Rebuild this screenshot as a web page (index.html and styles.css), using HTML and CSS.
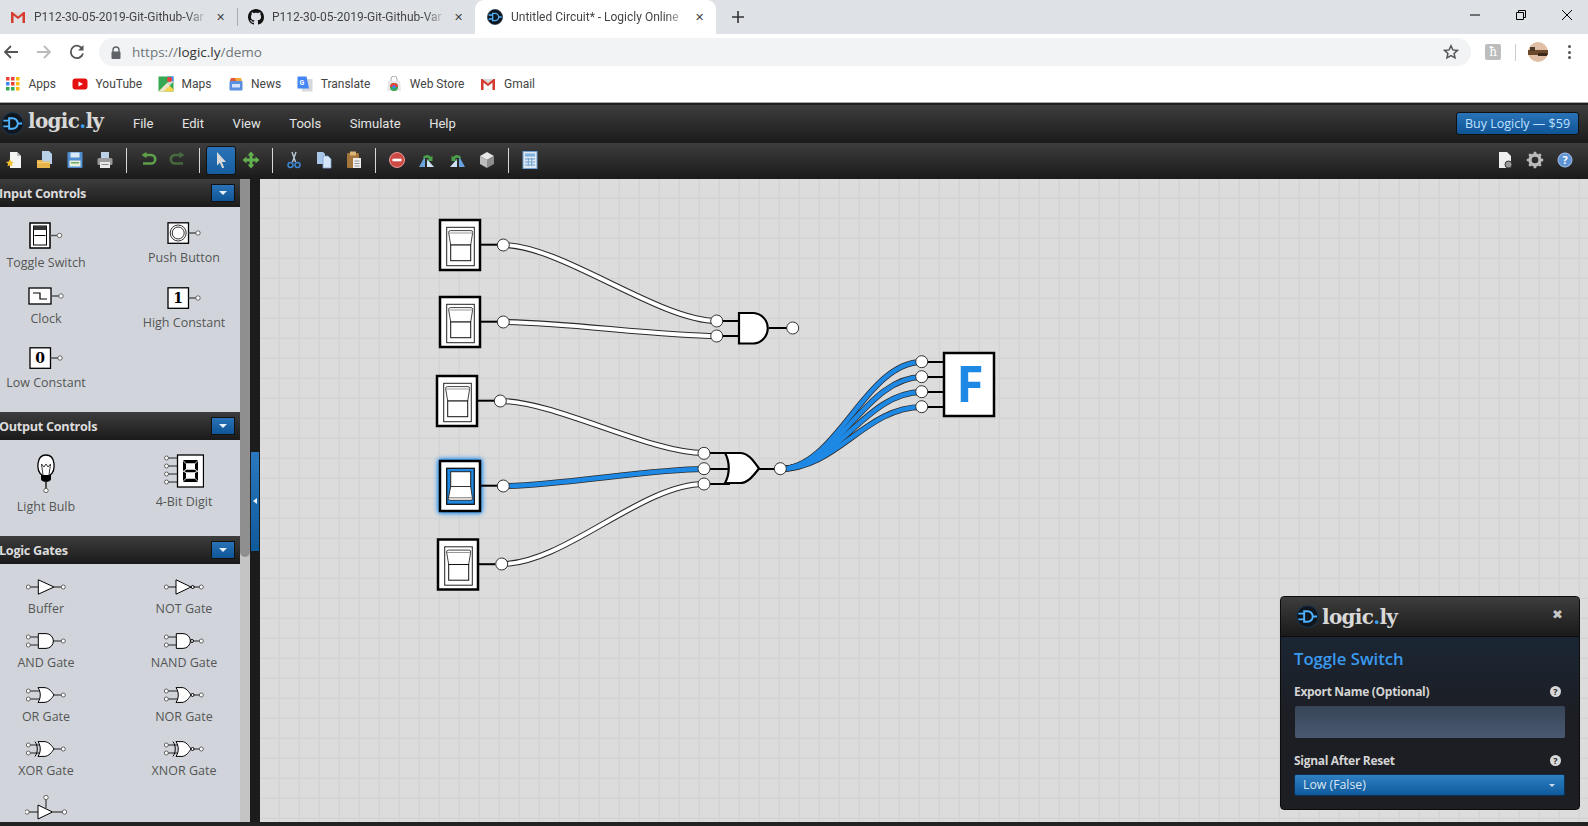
FILE: index.html
```html
<!DOCTYPE html>
<html lang="en">
<head>
    <meta charset="UTF-8">
    <title>Untitled Circuit* - Logicly Online</title>
    <link rel="stylesheet" href="styles.css">
</head>
<body>
    <svg class="defs" width="0" height="0">
        <defs>
            <symbol id="logo-mark" viewBox="0 0 24 24">
                <circle cx="12" cy="12" r="11.4" fill="#10161d" stroke="#1d3a57" stroke-width="1"/>
                <path d="M2.5 9h6M2.5 15h6M8.5 6.5h3.5a5.5 5.5 0 0 1 0 11H8.500zM17.500 12h4.500" fill="none" stroke="#4fb2ff" stroke-width="2"/>
            </symbol>
            <symbol id="gmail" viewBox="0 0 16 16">
                <path d="M1 3h14v11h-2.500V7L8 10.500 3.500 7v7H1z" fill="#d9d9d9"/>
                <path d="M1 14V3h1.500L8 7.500 13.500 3H15v11h-2.500V6.500L8 10 3.500 6.500V14z" fill="#d63b2f"/>
            </symbol>
            <symbol id="g-buffer" viewBox="0 0 40 16">
                <path d="M4 8h8M28 8h7" stroke="#555" stroke-width="1.500"/>
                <path d="M12.300 .8V15.200L28 8z" fill="#fff" stroke="#000" stroke-width="1"/>
                <circle cx="2.300" cy="8" r="2" class="pin"/><circle cx="37.300" cy="8" r="2" class="pin"/>
            </symbol>
            <symbol id="g-not" viewBox="0 0 40 16">
                <path d="M4 8h8M30 8h6" stroke="#555" stroke-width="1.500"/>
                <path d="M12 .8V15.200L27 8z" fill="#fff" stroke="#000" stroke-width="1"/>
                <circle cx="28.700" cy="8" r="1.500" fill="#fff" stroke="#000" stroke-width="1"/>
                <circle cx="2.300" cy="8" r="2" class="pin"/><circle cx="37.300" cy="8" r="2" class="pin"/>
            </symbol>
            <symbol id="g-and" viewBox="0 0 40 16">
                <path d="M4 4h8M4 12h8M27 8h8" stroke="#222" stroke-width="1"/>
                <path d="M12.300 .6H20a7.400 7.400 0 0 1 0 14.800H12.300z" fill="#fff" stroke="#000" stroke-width="1"/>
                <circle cx="2.300" cy="4" r="2" class="pin"/><circle cx="2.300" cy="12" r="2" class="pin"/><circle cx="37.300" cy="8" r="2" class="pin"/>
            </symbol>
            <symbol id="g-nand" viewBox="0 0 40 16">
                <path d="M4 4h8M4 12h8M30 8h6" stroke="#222" stroke-width="1"/>
                <path d="M12.300 .6H19a7.400 7.400 0 0 1 0 14.800H12.300z" fill="#fff" stroke="#000" stroke-width="1"/>
                <circle cx="28" cy="8" r="1.500" fill="#fff" stroke="#000" stroke-width="1"/>
                <circle cx="2.300" cy="4" r="2" class="pin"/><circle cx="2.300" cy="12" r="2" class="pin"/><circle cx="37.300" cy="8" r="2" class="pin"/>
            </symbol>
            <symbol id="g-or" viewBox="0 0 40 16">
                <path d="M4 4h10M4 12h10M27 8h8" stroke="#222" stroke-width="1"/>
                <path d="M12 .6H18C23 .6 26 5 28 8 26 11 23 15.400 18 15.400H12C15 11 15 5 12 .6z" fill="#fff" stroke="#000" stroke-width="1"/>
                <circle cx="2.300" cy="4" r="2" class="pin"/><circle cx="2.300" cy="12" r="2" class="pin"/><circle cx="37.300" cy="8" r="2" class="pin"/>
            </symbol>
            <symbol id="g-nor" viewBox="0 0 40 16">
                <path d="M4 4h10M4 12h10M30 8h6" stroke="#222" stroke-width="1"/>
                <path d="M12 .6H18C22 .6 25 5 27 8 25 11 22 15.400 18 15.400H12C15 11 15 5 12 .6z" fill="#fff" stroke="#000" stroke-width="1"/>
                <circle cx="28.500" cy="8" r="1.500" fill="#fff" stroke="#000" stroke-width="1"/>
                <circle cx="2.300" cy="4" r="2" class="pin"/><circle cx="2.300" cy="12" r="2" class="pin"/><circle cx="37.300" cy="8" r="2" class="pin"/>
            </symbol>
            <symbol id="g-xor" viewBox="0 0 40 16">
                <path d="M4 4h10M4 12h10M27 8h8" stroke="#222" stroke-width="1"/>
                <path d="M9 .6C12 5 12 11 9 15.400" fill="none" stroke="#000" stroke-width="1"/>
                <path d="M12 .6H18C23 .6 26 5 28 8 26 11 23 15.400 18 15.400H12C15 11 15 5 12 .6z" fill="#fff" stroke="#000" stroke-width="1"/>
                <circle cx="2.300" cy="4" r="2" class="pin"/><circle cx="2.300" cy="12" r="2" class="pin"/><circle cx="37.300" cy="8" r="2" class="pin"/>
            </symbol>
            <symbol id="g-xnor" viewBox="0 0 40 16">
                <path d="M4 4h10M4 12h10M30 8h6" stroke="#222" stroke-width="1"/>
                <path d="M9 .6C12 5 12 11 9 15.400" fill="none" stroke="#000" stroke-width="1"/>
                <path d="M12 .6H18C22 .6 25 5 27 8 25 11 22 15.400 18 15.400H12C15 11 15 5 12 .6z" fill="#fff" stroke="#000" stroke-width="1"/>
                <circle cx="28.500" cy="8" r="1.500" fill="#fff" stroke="#000" stroke-width="1"/>
                <circle cx="2.300" cy="4" r="2" class="pin"/><circle cx="2.300" cy="12" r="2" class="pin"/><circle cx="37.300" cy="8" r="2" class="pin"/>
            </symbol>

            <g id="switch-off">
                <rect x="0" y="0" width="40" height="50" fill="#fff" stroke="#000" stroke-width="2.500"/>
                <rect x="6.700" y="7.300" width="27.600" height="38.400" fill="#fff" stroke="#222" stroke-width="1"/>
                <path d="M8.600 12.500Q8.600 10.600 10.500 10.600H31Q32.700 10.600 32.700 12.500L30.700 25H10.700z" fill="#fff" stroke="#444" stroke-width="1"/>
                <path d="M9 13H32.300" stroke="#999" stroke-width="1"/>
                <rect x="10.700" y="25" width="20" height="15.700" fill="#fff" stroke="#111" stroke-width="1"/>
                <path d="M41 24.700H57" stroke="#000" stroke-width="2"/>
            </g>
            <g id="switch-on">
                <rect x="0" y="0" width="40" height="50" fill="#fff" stroke="#000" stroke-width="2.500" class="glow"/>
                <rect x="6.700" y="7.300" width="27.600" height="36" fill="#1e88e5" stroke="#111" stroke-width="1.300"/>
                <rect x="10.700" y="10.700" width="20" height="14.800" fill="#fff" stroke="#222" stroke-width="1"/>
                <path d="M10.700 25.500H30.700L32.500 37.500Q32.500 39.300 31 39.300H10Q8.300 39.300 8.300 37.500z" fill="#fff" stroke="#333" stroke-width="1"/>
                <path d="M9 36.800H32" stroke="#777" stroke-width="1"/>
                <path d="M41 24.700H57" stroke="#000" stroke-width="2"/>
            </g>

            <g id="paths-off">
                <path d="M503 245C561 245 659 321 717 321"/>
                <path d="M503 322C561 322 659 336 717 336"/>
                <path d="M500 401C555 401 649 453 704 453"/>
                <path d="M502 564C564 564 642 484 704 484"/>
            </g>
            <g id="paths-on">
                <path d="M503 486C557 486 650 469 704 469"/>
                <path d="M780 469C837 469 865 362 922 362"/>
                <path d="M780 469C837 469 865 377 922 377"/>
                <path d="M780 469C837 469 865 392 922 392"/>
                <path d="M780 469C837 469 865 407 922 407"/>
            </g>
        </defs>
    </svg>

    <div class="tabstrip">
        <div class="tab">
            <svg class="favicon" viewBox="0 0 16 16"><use href="#gmail"/></svg>
            <span class="tab-title">P112-30-05-2019-Git-Github-Var</span>
            <span class="tab-close">✕</span>
        </div>
        <div class="tab-sep"></div>
        <div class="tab">
            <svg class="favicon" viewBox="0 0 16 16"><path fill="#111" d="M8 0C3.580 0 0 3.580 0 8c0 3.540 2.290 6.530 5.470 7.590.4.070.55-.17.55-.38 0-.19-.01-.82-.01-1.490-2.010.37-2.530-.49-2.690-.94-.09-.23-.48-.94-.82-1.130-.28-.15-.68-.52-.01-.53.63-.01 1.080.58 1.230.82.72 1.210 1.870.87 2.330.66.07-.52.28-.87.51-1.070-1.780-.2-3.640-.89-3.640-3.950 0-.87.31-1.590.82-2.150-.08-.2-.36-1.020.08-2.120 0 0 .67-.21 2.200.82.64-.18 1.320-.27 2-.27.68 0 1.360.09 2 .27 1.530-1.040 2.200-.82 2.200-.82.44 1.100.16 1.920.08 2.120.51.56.82 1.270.82 2.150 0 3.070-1.870 3.750-3.650 3.950.29.25.54.73.54 1.480 0 1.070-.01 1.930-.01 2.200 0 .21.15.46.55.38A8.013 8.013 0 0016 8c0-4.420-3.580-8-8-8z"/></svg>
            <span class="tab-title">P112-30-05-2019-Git-Github-Var</span>
            <span class="tab-close">✕</span>
        </div>
        <div class="tab tab-active">
            <svg class="favicon" viewBox="0 0 24 24"><use href="#logo-mark"/></svg>
            <span class="tab-title">Untitled Circuit* - Logicly Online</span>
            <span class="tab-close">✕</span>
        </div>
        <svg class="new-tab" viewBox="0 0 12 12"><path d="M6 0v12M0 6h12" stroke="#333" stroke-width="1.600"/></svg>
        <div class="win-controls">
            <div class="win-btn"><svg width="10" height="10" viewBox="0 0 10 10"><path d="M0 5h10" stroke="#000"/></svg></div>
            <div class="win-btn"><svg width="10" height="10" viewBox="0 0 10 10"><path d="M.5 2.500h7v7h-7zM2.500 2.500v-2h7v7h-2" fill="none" stroke="#000"/></svg></div>
            <div class="win-btn"><svg width="10" height="10" viewBox="0 0 10 10"><path d="M0 0l10 10M10 0L0 10" stroke="#000"/></svg></div>
        </div>
    </div>

    <div class="addressbar">
        <svg class="nav-icon" viewBox="0 0 16 16"><path d="M15 8H2M8 2L2 8l6 6" fill="none" stroke="#555" stroke-width="1.800"/></svg>
        <svg class="nav-icon" viewBox="0 0 16 16"><path d="M1 8h13M8 2l6 6-6 6" fill="none" stroke="#bbb" stroke-width="1.800"/></svg>
        <svg class="nav-icon" viewBox="0 0 16 16"><path d="M13.500 5A6.200 6.200 0 1 0 14 9.500" fill="none" stroke="#555" stroke-width="1.800"/><path d="M14.500 1v5.500H9z" fill="#555"/></svg>
        <div class="omnibox">
            <svg class="lock" viewBox="0 0 10 13"><path d="M2 6V4a3 3 0 0 1 6 0v2" fill="none" stroke="#5f6368" stroke-width="1.400"/><rect x="0.500" y="5.500" width="9" height="7.500" rx="1" fill="#5f6368"/></svg>
            <span class="url">https://<b>logic.ly</b>/demo</span>
            <svg class="star" viewBox="0 0 16 16"><path d="M8 1.800l1.900 4.100 4.500.5-3.300 3 .9 4.400L8 11.600l-4 2.200.9-4.400-3.300-3 4.500-.5z" fill="none" stroke="#555" stroke-width="1.500"/></svg>
        </div>
        <div class="ext-icon">ħ</div>
        <div class="bar-sep"></div>
        <svg class="avatar" viewBox="0 0 20 20">
            <circle cx="10" cy="10" r="10" fill="#e0bfa6"/>
            <rect x="0" y="8" width="20" height="5" fill="#6b4a2c"/>
            <rect x="2" y="5" width="5" height="4" fill="#4d3a2a"/>
            <rect x="10" y="11" width="9" height="3" fill="#3c2a1a"/>
        </svg>
        <div class="menu-dots"><i></i><i></i><i></i></div>
    </div>

    <div class="bookmarks">
        <div class="bookmark">
            <svg class="bm-icon" viewBox="0 0 16 16">
                <rect x="1" y="1" width="3.500" height="3.500" fill="#ea4335"/><rect x="6" y="1" width="3.500" height="3.500" fill="#ea4335"/><rect x="11" y="1" width="3.500" height="3.500" fill="#fbbc05"/>
                <rect x="1" y="6" width="3.500" height="3.500" fill="#4285f4"/><rect x="6" y="6" width="3.500" height="3.500" fill="#ea4335"/><rect x="11" y="6" width="3.500" height="3.500" fill="#fbbc05"/>
                <rect x="1" y="11" width="3.500" height="3.500" fill="#34a853"/><rect x="6" y="11" width="3.500" height="3.500" fill="#34a853"/><rect x="11" y="11" width="3.500" height="3.500" fill="#fbbc05"/>
            </svg>
            Apps
        </div>
        <div class="bookmark">
            <svg class="bm-icon" viewBox="0 0 16 16"><rect x="0.500" y="2.500" width="15" height="11" rx="3" fill="#e61010"/><path d="M6.500 5.500v5L11 8z" fill="#fff"/></svg>
            YouTube
        </div>
        <div class="bookmark">
            <svg class="bm-icon" viewBox="0 0 16 16"><rect x="0.500" y="0.500" width="15" height="15" fill="#34a853"/><path d="M.5 15.500L9 7l6.500 6.500v2z" fill="#fbd24c"/><path d="M.5 15.500h5L15.500 6V.5z" fill="#e8eaed" opacity="0.800"/><path d="M9 .5h6.500V6z" fill="#4285f4"/><circle cx="11.500" cy="3.500" r="2.500" fill="#ea4335"/></svg>
            Maps
        </div>
        <div class="bookmark">
            <svg class="bm-icon" viewBox="0 0 16 16"><path d="M3 2h10l1 3H2z" fill="#f2a93b"/><path d="M3 2h4l1 3H2z" fill="#e0593c"/><rect x="1.500" y="5" width="13" height="9.500" rx="1" fill="#5a8fe0"/><rect x="4" y="8" width="8" height="3.500" fill="#d6e4fb"/></svg>
            News
        </div>
        <div class="bookmark">
            <svg class="bm-icon" viewBox="0 0 16 16"><rect x="5" y="3" width="10.500" height="12.500" fill="#d5d8dc"/><path d="M.5 1A.5.500 0 0 1 1 .5h8.500L12 12.500H1a.5.500 0 0 1-.5-.5z" fill="#4285f4"/><text x="2.500" y="9" class="bm-g">G</text></svg>
            Translate
        </div>
        <div class="bookmark">
            <svg class="bm-icon" viewBox="0 0 16 16"><path d="M5 5V3a3 3 0 0 1 6 0v2" fill="none" stroke="#aaa" stroke-width="1"/><path d="M2 5h12l1 10H1z" fill="#e8e8e8"/><circle cx="8" cy="11" r="4" fill="#34a853"/><path d="M4 11a4 4 0 0 1 8 0z" fill="#ea4335"/><circle cx="8" cy="11" r="1.700" fill="#4285f4"/></svg>
            Web Store
        </div>
        <div class="bookmark">
            <svg class="bm-icon" viewBox="0 0 16 16"><use href="#gmail"/></svg>
            Gmail
        </div>
    </div>

    <div class="app">
        <header class="app-header">
            <div class="brand">
                <svg class="brand-mark" viewBox="0 0 24 24"><use href="#logo-mark"/></svg>
                <span class="brand-name">logic<em>.</em>ly</span>
            </div>
            <nav class="menu">
                <a>File</a><a>Edit</a><a>View</a><a>Tools</a><a>Simulate</a><a>Help</a>
            </nav>
            <button class="buy-btn">Buy Logicly — $59</button>
        </header>

        <div class="toolbar">
            <div class="tool"><svg viewBox="0 0 18 18"><path d="M4 1h7l4 4v12H4z" fill="#f4f4f4"/><path d="M11 1l4 4h-4z" fill="#bbb"/><path d="M4 8l1.200 2.600 2.800.3-2.100 1.900.6 2.800L4 14.200 1.500 15.600l.6-2.800L0 10.900l2.800-.3z" fill="#f2c230"/></svg></div>
            <div class="tool"><svg viewBox="0 0 18 18"><path d="M6 0h7l3 3v10H6z" fill="#b8cfe8"/><path d="M1 9h5l1 1.500h7V17H1z" fill="#e6b24a"/><path d="M1 11h13v1H1z" fill="#f5d27d"/></svg></div>
            <div class="tool"><svg viewBox="0 0 18 18"><rect x="1.500" y="1" width="15" height="16" rx="1" fill="#4f8ed0"/><rect x="4.500" y="1.500" width="9" height="5" fill="#dbe8f5"/><rect x="3.500" y="9.500" width="11" height="6" fill="#e8f0e0"/><rect x="5" y="11" width="8" height="1.500" fill="#6fae5f"/></svg></div>
            <div class="tool"><svg viewBox="0 0 18 18"><rect x="5" y="1" width="8" height="6" fill="#bcd0e6"/><rect x="1.500" y="7" width="15" height="7" rx="1.500" fill="#9a9a9a"/><rect x="4" y="11" width="10" height="6" fill="#e8e8e8"/><rect x="5.500" y="13" width="7" height="1" fill="#888"/></svg></div>
            <div class="tool-sep"></div>
            <div class="tool"><svg viewBox="0 0 18 18"><path d="M6 4h6a4 4 0 0 1 0 8.500H4" fill="none" stroke="#5ea14a" stroke-width="2.600"/><path d="M7.500 .8V7.200L2.500 4z" fill="#5ea14a"/></svg></div>
            <div class="tool dim"><svg viewBox="0 0 18 18"><path d="M12 4H6a4 4 0 0 0 0 8.500h8" fill="none" stroke="#4d7a44" stroke-width="2.600"/><path d="M10.500 .8V7.200L15.500 4z" fill="#4d7a44"/></svg></div>
            <div class="tool-sep"></div>
            <div class="tool tool-on"><svg viewBox="0 0 18 18"><path d="M5 1l9 10H9.800l2.400 5.500-2 .8L7.900 11.800 5 14.500z" fill="#d8d8d8"/></svg></div>
            <div class="tool"><svg viewBox="0 0 18 18"><path d="M9 .5l3.500 4H10.500v3h3V5.500l4 3.500-4 3.500V10.500h-3v3h2L9 17.500l-3.500-4h2v-3h-3v2l-4-3.500 4-3.500v2h3v-3h-2z" fill="#62b04e"/></svg></div>
            <div class="tool-sep"></div>
            <div class="tool"><svg viewBox="0 0 18 18"><path d="M11 1L7.500 11M7 1l3.500 10" stroke="#b9c9d8" stroke-width="1.400" fill="none"/><circle cx="5.500" cy="14" r="2.500" fill="none" stroke="#3d86d0" stroke-width="1.500"/><circle cx="12.500" cy="14" r="2.500" fill="none" stroke="#3d86d0" stroke-width="1.500"/></svg></div>
            <div class="tool"><svg viewBox="0 0 18 18"><path d="M2 1h6l2 2v10H2z" fill="#a9c7e8"/><path d="M8 5h5l3 3v9H8z" fill="#d6e6f7" stroke="#7ea6d2" stroke-width="0.800"/></svg></div>
            <div class="tool"><svg viewBox="0 0 18 18"><rect x="2" y="2" width="12" height="15" rx="1" fill="#a5763c"/><rect x="5" y="0.500" width="6" height="4" fill="#d8b477"/><rect x="8" y="7" width="8" height="10" fill="#eee"/><path d="M9.500 10h5M9.500 12.500h5M9.500 15h5" stroke="#999"/></svg></div>
            <div class="tool-sep"></div>
            <div class="tool"><svg viewBox="0 0 18 18"><circle cx="9" cy="9" r="7.500" fill="#cf4a45" stroke="#e69c97" stroke-width="1"/><rect x="4.500" y="7.700" width="9" height="2.600" fill="#fff"/></svg></div>
            <div class="tool"><svg viewBox="0 0 18 18"><path d="M1 16L7 5v11z" fill="#6aa3dc"/><path d="M9 16V8l7 8z" fill="#cfe2f5"/><path d="M5 6a5 5 0 0 1 8 0l1.500-1.500V10H9l2-2a3 3 0 0 0-5 0z" fill="#4aa04a"/></svg></div>
            <div class="tool"><svg viewBox="0 0 18 18"><path d="M17 16L11 5v11z" fill="#6aa3dc"/><path d="M9 16V8l-7 8z" fill="#cfe2f5"/><path d="M13 6a5 5 0 0 0-8 0L3.500 4.500V10H9L7 8a3 3 0 0 1 5 0z" fill="#4aa04a"/></svg></div>
            <div class="tool"><svg viewBox="0 0 18 18"><path d="M9 1l7 4-7 4-7-4z" fill="#e6e6e6"/><path d="M2 5l7 4v8l-7-4z" fill="#bdbdbd"/><path d="M16 5l-7 4v8l7-4z" fill="#8d8d8d"/></svg></div>
            <div class="tool-sep"></div>
            <div class="tool"><svg viewBox="0 0 18 18"><rect x="2" y="0.500" width="14" height="17" fill="#dbe7f3" stroke="#6f9fd0" stroke-width="1"/><rect x="4" y="2.500" width="10" height="3" fill="#7fb0de"/><path d="M4 8h10M4 11h10M4 14h10M7.300 7v8M10.700 7v8" stroke="#6f9fd0"/></svg></div>
            <div class="tools-right">
                <div class="tool"><svg viewBox="0 0 18 18"><path d="M3 1h8l4 4v12H3z" fill="#eee"/><circle cx="12.500" cy="13.500" r="3.500" fill="#999" stroke="#333" stroke-width="1"/></svg></div>
                <div class="tool"><svg viewBox="0 0 18 18"><circle cx="9" cy="9" r="5" fill="none" stroke="#bbb" stroke-width="3.400"/><path d="M9 .8v3M9 14.200v3M.8 9h3M14.200 9h3M3.200 3.200l2.100 2.100M12.700 12.700l2.100 2.100M14.800 3.200l-2.100 2.100M5.300 12.700l-2.100 2.100" stroke="#bbb" stroke-width="2.600"/></svg></div>
                <div class="tool"><svg viewBox="0 0 18 18"><circle cx="9" cy="9" r="7" fill="#5e93d6" stroke="#a9c7ec" stroke-width="1"/><text x="9" y="13" class="help-q">?</text></svg></div>
            </div>
        </div>

        <div class="workspace">
            <aside class="sidebar">
                <div class="palette">
                    <div class="section-head">
                        <span class="section-title">Input Controls</span>
                        <span class="collapse-btn"></span>
                    </div>
                    <div class="section-body inputs">
                        <div class="item">
                            <svg width="34" height="27" viewBox="0 0 34 27"><rect x="1" y="1" width="20" height="25" fill="#fff" stroke="#000" stroke-width="1.500"/><rect x="4.500" y="4" width="13" height="19" fill="#fff" stroke="#000"/><path d="M4.500 4h13v4h-13z" fill="#333"/><path d="M5.500 13.500h11" stroke="#000"/><path d="M21 13.500h7" stroke="#555" stroke-width="1.500"/><circle cx="30.500" cy="13.500" r="2.200" class="pin"/></svg>
                            <span class="item-label">Toggle Switch</span>
                        </div>
                        <div class="item">
                            <svg width="34" height="22" viewBox="0 0 34 22"><rect x="1" y="0.800" width="20.500" height="20.500" fill="#fff" stroke="#000" stroke-width="1.300"/><circle cx="11.200" cy="11" r="8" fill="#fff" stroke="#333"/><circle cx="11.200" cy="11" r="6" fill="#fff" stroke="#333"/><path d="M21.500 11H29" stroke="#555" stroke-width="1.500"/><circle cx="31" cy="11" r="2.200" class="pin"/></svg>
                            <span class="item-label">Push Button</span>
                        </div>
                        <div class="item">
                            <svg width="36" height="18" viewBox="0 0 36 18"><rect x="1" y="1" width="22" height="16" fill="#fff" stroke="#000" stroke-width="1.300"/><path d="M5 6h7v6h7" fill="none" stroke="#000" stroke-width="1.200"/><path d="M23 9h8" stroke="#555" stroke-width="1.500"/><circle cx="33" cy="9" r="2.200" class="pin"/></svg>
                            <span class="item-label">Clock</span>
                        </div>
                        <div class="item">
                            <svg width="34" height="22" viewBox="0 0 34 22"><rect x="1" y="0.800" width="20.500" height="20.500" fill="#fff" stroke="#000" stroke-width="1.300"/><text x="11.200" y="16" class="bit">1</text><path d="M21.500 11H29" stroke="#555" stroke-width="1.500"/><circle cx="31" cy="11" r="2.200" class="pin"/></svg>
                            <span class="item-label">High Constant</span>
                        </div>
                        <div class="item">
                            <svg width="34" height="22" viewBox="0 0 34 22"><rect x="1" y="0.800" width="20.500" height="20.500" fill="#fff" stroke="#000" stroke-width="1.300"/><text x="11.200" y="16" class="bit">0</text><path d="M21.500 11H29" stroke="#555" stroke-width="1.500"/><circle cx="31" cy="11" r="2.200" class="pin"/></svg>
                            <span class="item-label">Low Constant</span>
                        </div>
                    </div>

                    <div class="section-head">
                        <span class="section-title">Output Controls</span>
                        <span class="collapse-btn"></span>
                    </div>
                    <div class="section-body outputs">
                        <div class="item">
                            <svg width="24" height="39" viewBox="0 0 24 39"><path d="M8 21C2 17 2 1 12 1s10 16 4 20v1H8z" fill="#fff" stroke="#000" stroke-width="1.300"/><path d="M9 21L7.500 10l2.500 3 2-3 2 3 2.500-3L15 21" fill="none" stroke="#222" stroke-width="0.900"/><path d="M7 21h10v4a5 3 0 0 1-10 0z" fill="#000"/><path d="M12 27v8" stroke="#222" stroke-width="1.500"/><circle cx="12" cy="36.500" r="2.200" class="pin"/></svg>
                            <span class="item-label">Light Bulb</span>
                        </div>
                        <div class="item">
                            <svg width="40" height="34" viewBox="0 0 40 34"><path d="M4 4h9M4 12h9M4 20h9M4 28h9" stroke="#222" stroke-width="1"/><circle cx="2.500" cy="4" r="2" class="pin"/><circle cx="2.500" cy="12" r="2" class="pin"/><circle cx="2.500" cy="20" r="2" class="pin"/><circle cx="2.500" cy="28" r="2" class="pin"/><rect x="13.500" y="1" width="26" height="32" fill="#fff" stroke="#000" stroke-width="1.300"/><path d="M19 6h15l-3 3.200h-9zM19 7l3 3v5l-3 2zM34 7l-3 3v5l3 2zM20 17l2.500-1.300h8L33 17l-2.500 1.300h-8zM19 17.500l3 1.500v5l-3 3zM34 17.500L31 19v5l3 3zM19 28h15l-3-3.200h-9z" fill="#000"/></svg>
                            <span class="item-label">4-Bit Digit</span>
                        </div>
                    </div>

                    <div class="section-head">
                        <span class="section-title">Logic Gates</span>
                        <span class="collapse-btn"></span>
                    </div>
                    <div class="section-body gates">
                        <div class="item"><svg class="gate-icon"><use href="#g-buffer"/></svg><span class="item-label">Buffer</span></div>
                        <div class="item"><svg class="gate-icon"><use href="#g-not"/></svg><span class="item-label">NOT Gate</span></div>
                        <div class="item"><svg class="gate-icon"><use href="#g-and"/></svg><span class="item-label">AND Gate</span></div>
                        <div class="item"><svg class="gate-icon"><use href="#g-nand"/></svg><span class="item-label">NAND Gate</span></div>
                        <div class="item"><svg class="gate-icon"><use href="#g-or"/></svg><span class="item-label">OR Gate</span></div>
                        <div class="item"><svg class="gate-icon"><use href="#g-nor"/></svg><span class="item-label">NOR Gate</span></div>
                        <div class="item"><svg class="gate-icon"><use href="#g-xor"/></svg><span class="item-label">XOR Gate</span></div>
                        <div class="item"><svg class="gate-icon"><use href="#g-xnor"/></svg><span class="item-label">XNOR Gate</span></div>
                        <div class="item">
                            <svg width="42" height="26" viewBox="0 0 42 26"><path d="M4 17h9M28 17h9M21 4v9" stroke="#555" stroke-width="1.500"/><path d="M13 10V24L27.500 17z" fill="#fff" stroke="#000" stroke-width="1"/><circle cx="21" cy="2.500" r="2.200" class="pin"/><circle cx="2" cy="17" r="2.200" class="pin"/><circle cx="39.500" cy="17" r="2.200" class="pin"/></svg>
                        </div>
                    </div>
                </div>
                <div class="scrollbar"><div class="scroll-thumb"></div></div>
            </aside>

            <div class="splitter"><div class="split-handle"></div></div>

            <main class="canvas">
                <svg class="circuit" viewBox="260 179 1328 643">
                    <use href="#paths-off" class="wire-edge"/>
                    <use href="#paths-off" class="wire-off"/>
                    <use href="#paths-on" class="wire-edge"/>
                    <use href="#paths-on" class="wire-on"/>

                    <use href="#switch-off" x="440" y="220"/>
                    <use href="#switch-off" x="440" y="297"/>
                    <use href="#switch-off" x="437" y="376"/>
                    <use href="#switch-on" x="440" y="461"/>
                    <use href="#switch-off" x="438" y="539.500"/>

                    <path d="M717 321H739M717 336H739M769 328H793" class="stub"/>
                    <path d="M739 313H753.700A15.300 15.300 0 0 1 753.700 343.500H739z" class="gate"/>

                    <path d="M704 453H730M704 469H730M704 484H730M759 469H780M922 362H944M922 377H944M922 392H944M922 407H944" class="stub"/>
                    <path d="M725 453H740C748 453 753 460 759 468.500 753 476 748 483 740 483H725C730 474 730 462 725 453z" class="gate"/>

                    <circle cx="503.300" cy="245" r="6" class="port"/>
                    <circle cx="503.300" cy="322" r="6" class="port"/>
                    <circle cx="500.300" cy="401" r="6" class="port"/>
                    <circle cx="503.300" cy="486" r="6" class="port"/>
                    <circle cx="501.700" cy="564" r="6" class="port"/>
                    <circle cx="716.700" cy="321" r="6" class="port"/>
                    <circle cx="716.700" cy="336" r="6" class="port"/>
                    <circle cx="792.700" cy="328" r="6" class="port"/>
                    <circle cx="704" cy="453.300" r="6" class="port"/>
                    <circle cx="704" cy="468.700" r="6" class="port"/>
                    <circle cx="704" cy="484" r="6" class="port"/>
                    <circle cx="780.300" cy="468.700" r="6" class="port"/>
                    <circle cx="921.700" cy="361.700" r="6" class="port"/>
                    <circle cx="921.700" cy="376.700" r="6" class="port"/>
                    <circle cx="921.700" cy="391.700" r="6" class="port"/>
                    <circle cx="921.700" cy="406.700" r="6" class="port"/>

                    <rect x="944" y="353" width="50" height="63" fill="#fff" stroke="#000" stroke-width="2.500"/>
                    <text x="970" y="402.300" class="hex-value">F</text>
                </svg>

                <section class="props">
                    <div class="props-head">
                        <svg class="props-mark" viewBox="0 0 24 24"><use href="#logo-mark"/></svg>
                        <span class="brand-name">logic<em>.</em>ly</span>
                        <span class="props-close">✖</span>
                    </div>
                    <div class="props-body">
                        <h2 class="props-title">Toggle Switch</h2>
                        <div class="field-label">Export Name (Optional)<span class="hint">?</span></div>
                        <div class="field-input"></div>
                        <div class="field-label second">Signal After Reset<span class="hint">?</span></div>
                        <div class="field-select">Low (False)<i class="caret"></i></div>
                    </div>
                </section>
            </main>
        </div>
        <div class="statusbar"></div>
    </div>
</body>
</html>
```

FILE: styles.css
```css
/* General */
* {
    box-sizing: border-box;
}

html, body {
    margin: 0;
    padding: 0;
    height: 100%;
    overflow: hidden;
}

body {
    display: flex;
    flex-direction: column;
    font-family: "Open Sans", "Noto Sans", sans-serif;
    background: #fff;
}

.defs {
    position: absolute;
}

.pin {
    fill: #fff;
    stroke: #444;
    stroke-width: 0.8;
}

/* Browser tabs */
.tabstrip {
    display: flex;
    align-items: center;
    height: 34px;
    flex: none;
    background: #dee1e6;
    font-family: Roboto, sans-serif;
}

.tab {
    display: flex;
    align-items: center;
    width: 237px;
    height: 34px;
    padding: 0 5px 0 10px;
    font-size: 12px;
    color: #444;
}

.tab-sep {
    width: 1px;
    height: 18px;
    background: #a9acb2;
}

.tab-active {
    width: 241px;
    padding-left: 12px;
    background: #fff;
    border-radius: 9px 9px 0 0;
}

.favicon {
    width: 16px;
    height: 16px;
    flex: none;
    margin-right: 8px;
}

.tab-title {
    flex: 1;
    min-width: 0;
    white-space: nowrap;
    overflow: hidden;
    -webkit-mask-image: linear-gradient(to right, #000 88%, transparent);
    mask-image: linear-gradient(to right, #000 88%, transparent);
}

.tab-close {
    flex: none;
    width: 24px;
    text-align: center;
    font-size: 11px;
    color: #444;
}

.new-tab {
    width: 12px;
    height: 12px;
    margin-left: 16px;
}

.win-controls {
    display: flex;
    margin-left: auto;
    margin-right: -2px;
}

.win-btn {
    display: flex;
    align-items: center;
    justify-content: center;
    width: 46px;
    height: 30px;
    margin-bottom: 4px;
}

/* Address bar */
.addressbar {
    display: flex;
    align-items: center;
    flex: none;
    height: 34px;
    padding: 2px 17px 0 3px;
    background: #fff;
}

.nav-icon {
    width: 16px;
    height: 16px;
    margin-right: 17px;
}

.omnibox {
    display: flex;
    align-items: center;
    flex: 1;
    height: 28px;
    margin-left: -3px;
    padding: 0 12px 0 12px;
    background: #f1f3f4;
    border-radius: 14px;
}

.lock {
    width: 10px;
    height: 13px;
    margin-right: 11px;
}

.url {
    flex: 1;
    font-size: 13.500px;
    color: #70757a;
}

.url b {
    font-weight: 400;
    color: #333;
}

.star {
    width: 16px;
    height: 16px;
}

.ext-icon {
    width: 16px;
    height: 16px;
    margin-left: 14px;
    background: #bdbdbd;
    border-radius: 2px;
    color: #fff;
    font-family: "DejaVu Serif", serif;
    font-size: 12px;
    line-height: 16px;
    text-align: center;
}

.bar-sep {
    width: 1px;
    height: 17px;
    margin: 0 12px 0 14px;
    background: #ccc;
}

.avatar {
    width: 20px;
    height: 20px;
}

.menu-dots {
    display: flex;
    flex-direction: column;
    gap: 2.500px;
    margin-left: 20px;
}

.menu-dots i {
    width: 3px;
    height: 3px;
    border-radius: 50%;
    background: #555;
}

/* Bookmarks */
.bookmarks {
    display: flex;
    align-items: center;
    gap: 16px;
    flex: none;
    height: 35px;
    padding: 0 0 2px 5px;
    font-family: Roboto, sans-serif;
    font-size: 12px;
    color: #444;
    border-bottom: 1px solid #a8a8a8;
}

.bookmark {
    display: flex;
    align-items: center;
    gap: 7.500px;
}

.bm-icon {
    width: 16px;
    height: 16px;
}

.bm-g {
    font-size: 7px;
    font-weight: 700;
    fill: #fff;
}

/* App header */
.app {
    display: flex;
    flex-direction: column;
    flex: 1;
    min-height: 0;
}

.app-header {
    display: flex;
    align-items: center;
    flex: none;
    height: 40px;
    padding: 0 9px 2px 1px;
    border-top: 2px solid #1e1e1e;
    background: linear-gradient(#3d3d3d, #1b1b1b);
}

.brand {
    display: flex;
    align-items: center;
    width: 132px;
}

.brand-mark {
    width: 23px;
    height: 23px;
    margin-right: 4px;
}

.brand-name {
    margin-top: -4px;
    font-family: "DejaVu Serif", serif;
    font-weight: 700;
    font-size: 20px;
    letter-spacing: -0.700px;
    color: #d8d8d8;
}

.brand-name em {
    font-style: normal;
    color: #3c9de8;
}

.menu {
    display: flex;
    gap: 28.600px;
    margin-top: 1px;
    font-family: Roboto, sans-serif;
    font-size: 13px;
    color: #e4e4e4;
}

.buy-btn {
    margin-left: auto;
    width: 123px;
    height: 23px;
    padding: 0;
    border: 1px solid #111;
    border-radius: 3px;
    background: linear-gradient(#2a73b8, #0f5596);
    color: #bfe0ff;
    font-family: inherit;
    font-size: 12.500px;
}

/* Toolbar */
.toolbar {
    display: flex;
    align-items: center;
    flex: none;
    height: 36px;
    padding-bottom: 2px;
    background: linear-gradient(#3d3d3d, #1a1a1a);
}

.tool {
    display: flex;
    align-items: center;
    justify-content: center;
    width: 30px;
    height: 29px;
}

.tool svg {
    width: 18px;
    height: 18px;
}

.tool.dim {
    opacity: 0.800;
}

.tool-on {
    background: linear-gradient(#2a73b8, #165d9e);
    border: 1px solid #111;
    border-radius: 3px;
}

.tool-sep {
    width: 1px;
    height: 25px;
    margin: 0 6px;
    background: #d8d8d8;
}

.tools-right {
    display: flex;
    margin-left: auto;
    margin-right: 8px;
}

.help-q {
    font-size: 11px;
    font-weight: 700;
    fill: #fff;
    text-anchor: middle;
}

/* Workspace */
.workspace {
    display: flex;
    flex: 1;
    min-height: 0;
}

.sidebar {
    display: flex;
    flex: none;
    width: 250px;
}

.palette {
    width: 240px;
    overflow: hidden;
    background: #d1d5db;
}

.section-head {
    display: flex;
    align-items: center;
    justify-content: space-between;
    height: 28px;
    padding-right: 5px;
    background: linear-gradient(#3d3d3d, #1a1a1a);
}

.section-title {
    margin-left: -1px;
    font-size: 12.700px;
    font-weight: 700;
    letter-spacing: -0.300px;
    color: #dcdcdc;
}

.collapse-btn {
    position: relative;
    width: 24px;
    height: 18px;
    border: 1px solid #111;
    background: linear-gradient(#2a73b8, #0f5596);
}

.collapse-btn::after {
    content: "";
    position: absolute;
    left: 7px;
    top: 6px;
    border: 4px solid transparent;
    border-top: 4px solid #e8f0f8;
}

.section-body {
    display: grid;
    grid-template-columns: 138px 138px;
    margin-left: -23px;
}

.inputs {
    grid-template-rows: 65px 60px 65px;
    padding-top: 15px;
}

.outputs {
    grid-template-rows: 82px;
    padding-top: 14px;
}

.gates {
    grid-auto-rows: 54px;
    padding-top: 15px;
}

.item {
    display: flex;
    flex-direction: column;
    align-items: center;
    gap: 6px;
}

.item svg {
    flex: none;
}

.gate-icon {
    width: 40px;
    height: 16px;
}

.item-label {
    font-size: 12.500px;
    line-height: 16px;
    color: #555;
    white-space: nowrap;
}

.bit {
    font-family: "DejaVu Serif", serif;
    font-size: 14px;
    font-weight: 700;
    text-anchor: middle;
}

.scrollbar {
    width: 10px;
    background: #c4c4c4;
}

.scroll-thumb {
    height: 378px;
    background: #8f8f8f;
    border-radius: 0 0 5px 5px;
}

.splitter {
    display: flex;
    align-items: center;
    flex: none;
    width: 10px;
    background: #1c1c1c;
}

.split-handle {
    position: relative;
    width: 8px;
    height: 99px;
    margin: 2px 1px 0;
    background: linear-gradient(#2a78bf, #0f5a9c);
}

.split-handle::after {
    content: "";
    position: absolute;
    left: -1px;
    top: 46px;
    border: 3px solid transparent;
    border-right: 4px solid #e8f0f8;
}

/* Canvas */
.canvas {
    position: relative;
    flex: 1;
    overflow: hidden;
    background-color: #dcdcdc;
    background-image:
        linear-gradient(to right, transparent 18px, #d9d9d9 18px, #d9d9d9 19px, #d3d3d3 19px),
        linear-gradient(to bottom, transparent 18px, #d9d9d9 18px, #d9d9d9 19px, #d3d3d3 19px);
    background-size: 20px 20px;
}

.circuit {
    position: absolute;
    left: 0;
    top: 0;
    width: 100%;
    height: 100%;
}

.wire-edge,
.wire-off,
.wire-on {
    fill: none;
}

.wire-edge {
    stroke: #2b2b2b;
    stroke-width: 6;
}

.wire-off {
    stroke: #fff;
    stroke-width: 3.800;
}

.wire-on {
    stroke: #1e88e5;
    stroke-width: 4.400;
}

.glow {
    filter: drop-shadow(0 0 2px #2f95f0) drop-shadow(0 0 2px #2f95f0);
}

.stub {
    fill: none;
    stroke: #000;
    stroke-width: 2;
}

.gate {
    fill: #fff;
    stroke: #000;
    stroke-width: 2.200;
}

.port {
    fill: #fff;
    stroke: #333;
    stroke-width: 1;
}

.hex-value {
    font-family: "Open Sans", sans-serif;
    font-size: 50px;
    font-weight: 700;
    fill: #1e88e5;
    text-anchor: middle;
}

/* Properties window */
.props {
    position: absolute;
    right: 8px;
    bottom: 12px;
    width: 300px;
    height: 214px;
    overflow: hidden;
    border: 1px solid #0c0c0c;
    border-radius: 4px;
    background: linear-gradient(#1a2a3c, #1c1e24 55%);
}

.props-head {
    display: flex;
    align-items: center;
    height: 40px;
    padding-left: 15px;
    border-bottom: 1px solid #0c0c0c;
    background: linear-gradient(#3d3d3d, #1a1a1a);
}

.props-mark {
    width: 23px;
    height: 23px;
    margin-right: 3px;
}

.props-head .brand-name {
    margin-top: 0;
}

.props-close {
    margin: -5px 16px 0 auto;
    font-size: 13px;
    color: #c8c8c8;
}

.props-body {
    padding: 10px 14px 0 13px;
}

.props-title {
    margin: 0;
    font-size: 16.700px;
    line-height: 24px;
    font-weight: 600;
    color: #3a9aee;
}

.field-label {
    display: flex;
    align-items: center;
    justify-content: space-between;
    height: 18px;
    margin-top: 11px;
    padding-right: 4px;
    font-size: 12px;
    font-weight: 700;
    letter-spacing: -0.300px;
    color: #d4d4d4;
}

.field-label.second {
    margin-top: 13px;
}

.hint {
    width: 11px;
    height: 11px;
    border-radius: 50%;
    background: #d8d8d8;
    color: #1c1e24;
    font-size: 9px;
    line-height: 11px;
    text-align: center;
    letter-spacing: 0;
}

.field-input {
    height: 32px;
    margin: 6px 0 0 1px;
    border-radius: 2px;
    background: linear-gradient(#384558, #4a5870);
}

.field-select {
    position: relative;
    height: 22px;
    margin: 5px 0 0 0;
    padding-left: 8px;
    border: 1px solid #0f2f50;
    border-radius: 2px;
    background: linear-gradient(#2f80c4, #0f5a9c);
    color: #dce6f0;
    font-size: 12.300px;
    line-height: 20px;
}

.caret {
    position: absolute;
    right: 9px;
    top: 9px;
    border: 3.500px solid transparent;
    border-top: 3.500px solid #d0dcea;
}

.statusbar {
    flex: none;
    height: 4px;
    background: #222;
}
```
